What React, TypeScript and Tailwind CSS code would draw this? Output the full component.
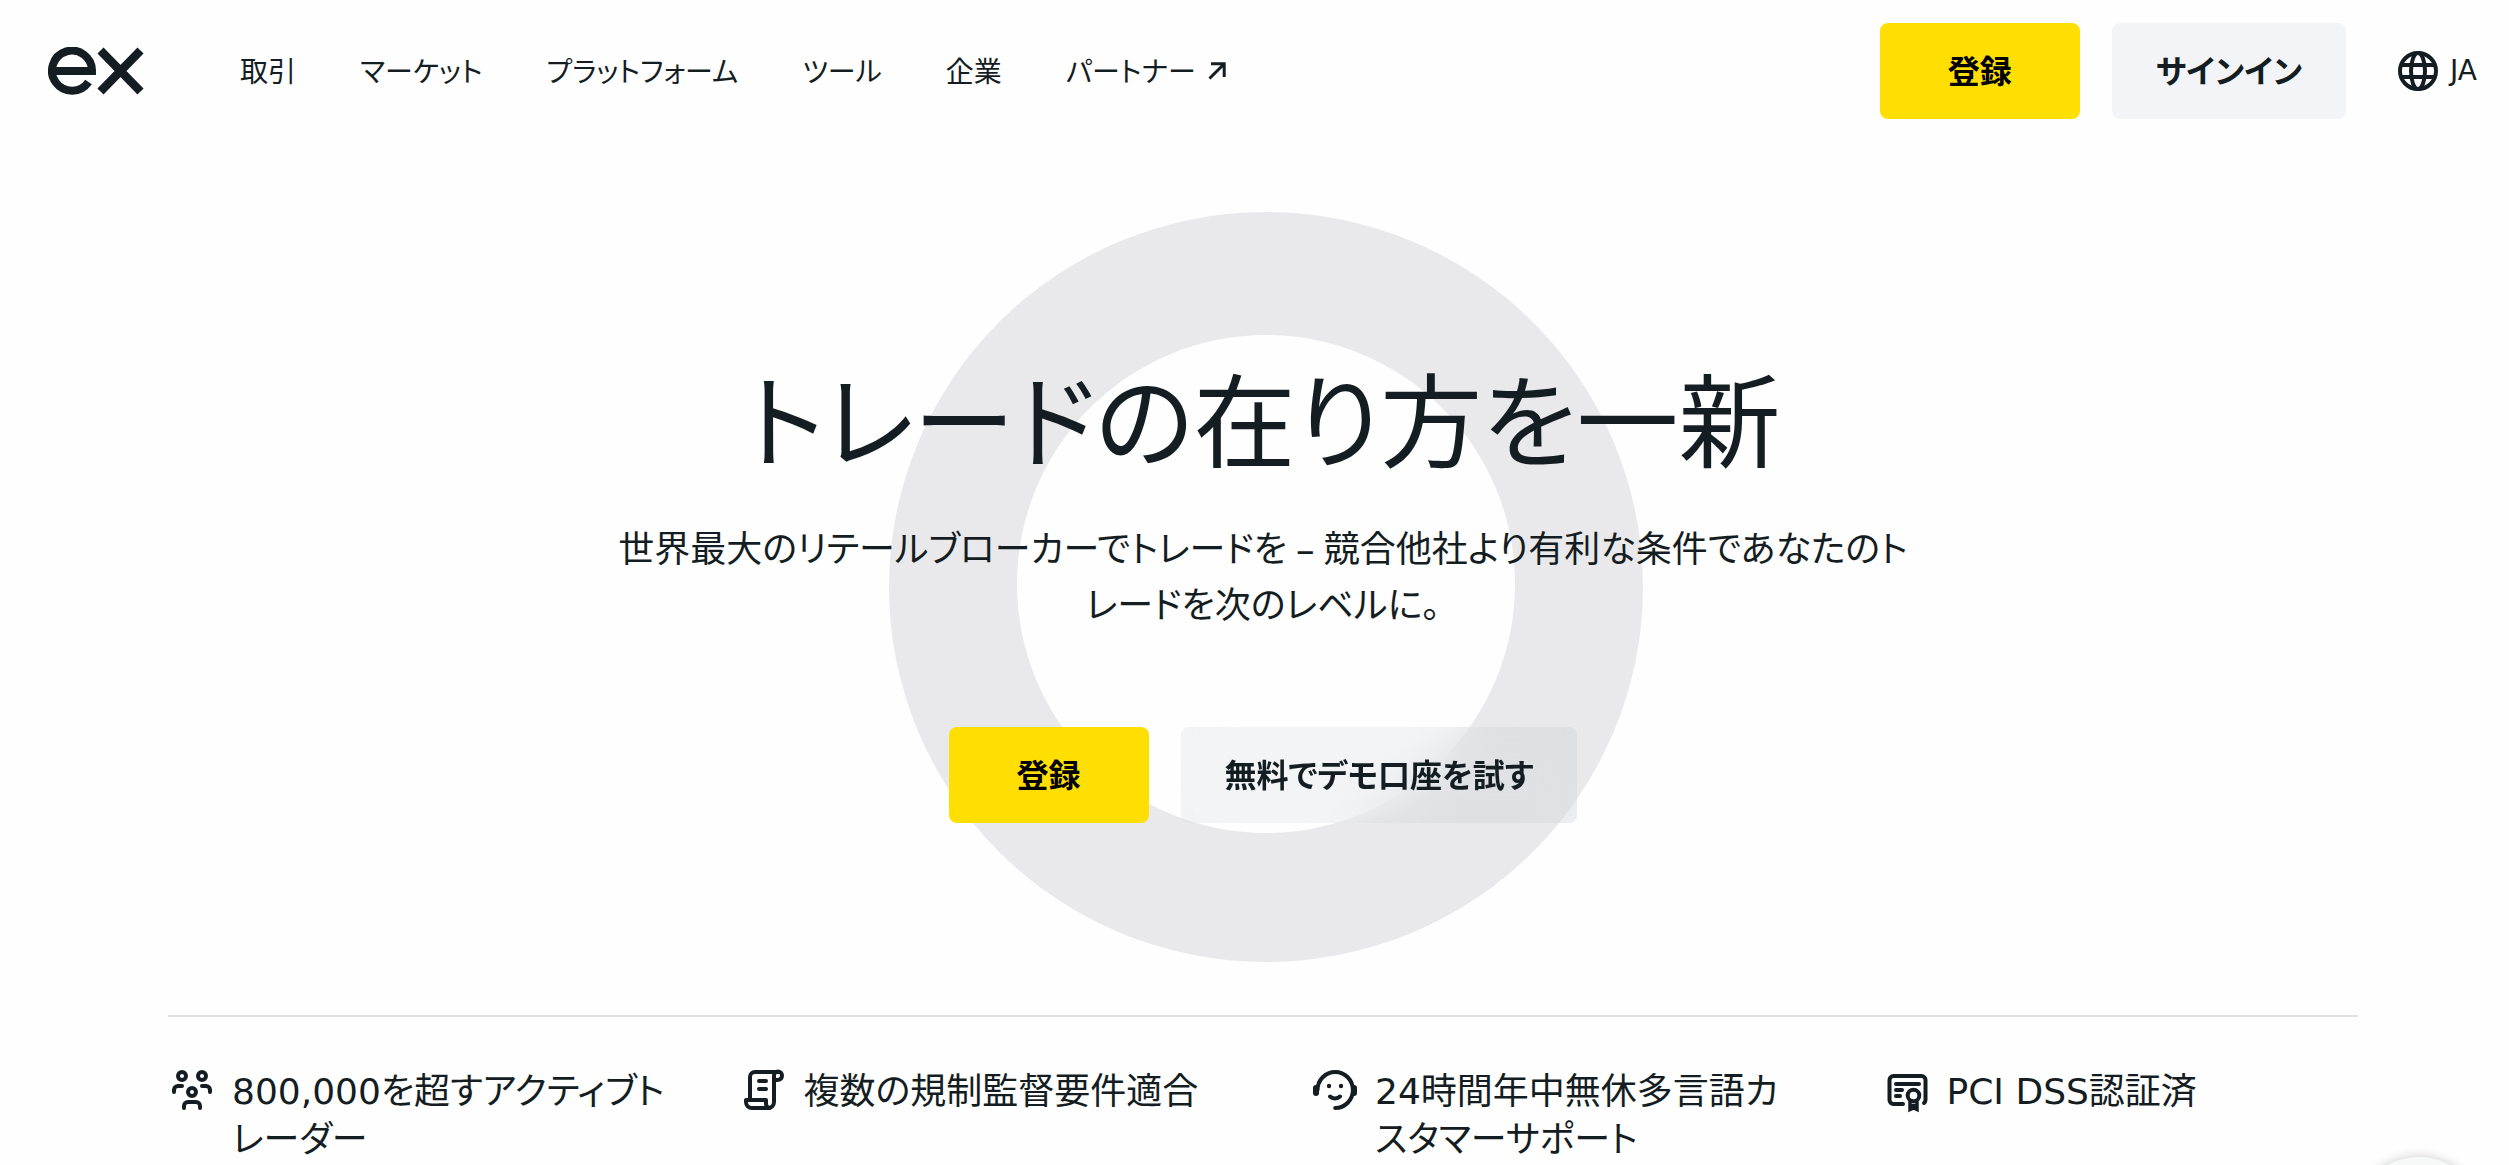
import React from "react";

interface NavItem {
  label: string;
  external?: boolean;
}

interface Feature {
  icon: React.FC;
  lines: string[];
}

const NAV_ITEMS: NavItem[] = [
  { label: "取引" },
  { label: "マーケット" },
  { label: "プラットフォーム" },
  { label: "ツール" },
  { label: "企業" },
  { label: "パートナー", external: true },
];

const Logo = () => (
  <svg viewBox="0 0 96 48" className="h-12 w-24" fill="none" stroke="currentColor" strokeWidth="8">
    <path d="M4 24h40A20 20 0 1 0 40.500 35" />
    <path d="M52.500 3.500l40 41M92.500 3.500l-40 41" strokeWidth="8.500" />
  </svg>
);

const ArrowIcon = () => (
  <svg viewBox="0 0 18 18" className="h-[18px] w-[18px]" fill="none" stroke="currentColor" strokeWidth="3">
    <path d="M1.500 16.500L16 2M3 1.800h13.200V15" />
  </svg>
);

const GlobeIcon = () => (
  <svg viewBox="0 0 40 40" className="size-10" fill="none" stroke="currentColor" strokeWidth="4">
    <circle cx="20" cy="20" r="18" />
    <ellipse cx="20" cy="20" rx="7" ry="18" />
    <path d="M3 14h34M3 26h34" />
  </svg>
);

const PeopleIcon = () => (
  <svg viewBox="0 0 48 48" className="size-12 shrink-0" fill="none" stroke="currentColor" strokeWidth="4" strokeLinecap="round">
    <circle cx="14" cy="11" r="4" />
    <circle cx="34" cy="11" r="4" />
    <circle cx="24" cy="27" r="4" />
    <path d="M6 27v-2a4 4 0 0 1 4-4h4M42 27v-2a4 4 0 0 0-4-4h-4" />
    <path d="M16 43v-2a4 4 0 0 1 4-4h8a4 4 0 0 1 4 4v2" />
  </svg>
);

const ScrollIcon = () => (
  <svg viewBox="0 0 48 48" className="size-12 shrink-0" fill="none" stroke="currentColor" strokeWidth="4" strokeLinejoin="round" strokeLinecap="round">
    <path d="M10 35V12a5 5 0 0 1 5-5h23" />
    <path d="M34 15v-4.500a3.500 3.500 0 0 1 8 0c0 3-2 4.500-5 4.500h-3v22a6 6 0 0 1-6 6H12a6 6 0 0 1-6-6v-2h20v4a4 4 0 0 0 4 4" />
    <path d="M19 16h7M19 24h7" />
  </svg>
);

const SupportIcon = () => (
  <svg viewBox="0 0 48 48" className="size-12 shrink-0" fill="none" stroke="currentColor" strokeWidth="4" strokeLinecap="round">
    <path d="M6.500 25a17.700 18 0 1 1 17.700 18" />
    <path d="M19 31.500c2.500 2.500 7.500 2.500 10 0" />
    <rect x="2" y="20" width="6" height="11" rx="3" fill="currentColor" stroke="none" />
    <rect x="40" y="20" width="6" height="11" rx="3" fill="currentColor" stroke="none" />
    <circle cx="18" cy="21" r="2.200" fill="currentColor" stroke="none" />
    <circle cx="30" cy="21" r="2.200" fill="currentColor" stroke="none" />
  </svg>
);

const CertificateIcon = () => (
  <svg viewBox="0 0 48 48" className="size-12 shrink-0" fill="none" stroke="currentColor" strokeWidth="4" strokeLinecap="round">
    <path d="M20 39h-9.500a4 4 0 0 1-4-4V15a4 4 0 0 1 4-4h28a4 4 0 0 1 4 4v20a4 4 0 0 1-1.500 3" />
    <path d="M13 19h23M13 25h6M13 31h4" />
    <circle cx="30.500" cy="30.500" r="5.800" />
    <path d="M27 37v7.500l3.500-1.500 3.500 1.500V37M27 40.500h7" strokeWidth="3.500" />
  </svg>
);

const FEATURES: Feature[] = [
  { icon: PeopleIcon, lines: ["800,000を超すアクティブト", "レーダー"] },
  { icon: ScrollIcon, lines: ["複数の規制監督要件適合"] },
  { icon: SupportIcon, lines: ["24時間年中無休多言語カ", "スタマーサポート"] },
  { icon: CertificateIcon, lines: ["PCI DSS認証済"] },
];

const BUTTON = "h-24 rounded-lg text-[32px] font-bold whitespace-nowrap";

const Header = () => (
  <header className="flex items-center justify-between pt-[23px] pr-8 pl-12">
    <div className="flex items-center gap-24">
      <a href="#" aria-label="ex">
        <Logo />
      </a>
      <nav className="flex items-center gap-16 text-[28px] whitespace-nowrap">
        {NAV_ITEMS.map((item) => (
          <a key={item.label} href="#" className="flex items-center gap-3">
            {item.label}
            {item.external && <ArrowIcon />}
          </a>
        ))}
      </nav>
    </div>
    <div className="flex items-center gap-8">
      <button className={`${BUTTON} w-[200px] bg-[#ffde02] text-black`}>登録</button>
      <button className={`${BUTTON} bg-[#f3f4f7] px-11`}>サインイン</button>
      <button className="ml-5 flex items-center gap-3 text-[28px]">
        <GlobeIcon />
        <span className="font-['DejaVu_Sans',sans-serif]">JA</span>
      </button>
    </div>
  </header>
);

const Ring = () => (
  <svg viewBox="0 0 760 752" className="absolute top-0 left-1/2 -z-10 h-[752px] w-[760px] -translate-x-1/2">
    <ellipse cx="383" cy="375" rx="377" ry="375" fill="#e9e9eb" />
    <circle cx="383" cy="372" r="249" fill="#fefefe" />
  </svg>
);

const Hero = () => (
  <section className="relative isolate flex flex-col items-center pb-48 text-center">
    <Ring />
    <h1 className="mt-[137px] text-[102px] leading-[144px]">トレードの在り方を一新</h1>
    <p className="mt-7 text-[36px] leading-[56px]">
      世界最大のリテールブローカーでトレードを – 競合他社より有利な条件であなたのト
      <br />
      レードを次のレベルに。
    </p>
    <div className="mt-[94px] flex gap-8">
      <button className={`${BUTTON} w-[200px] bg-[#ffde02] text-black`}>登録</button>
      <button className={`${BUTTON} bg-[rgba(40,65,105,0.05)] px-11 backdrop-blur-xl`}>
        無料でデモ口座を試す
      </button>
    </div>
  </section>
);

const Features = () => (
  <ul className="grid grid-cols-4 gap-24 border-t-2 border-[#e1e2e1] pt-12 font-['DejaVu_Sans','Noto_Sans_CJK_JP',sans-serif] text-[36px] leading-[48px] whitespace-nowrap">
    {FEATURES.map(({ icon: Icon, lines }) => (
      <li key={lines[0]} className="flex items-start gap-4">
        <Icon />
        <span className="pt-[3px]">
          {lines.map((line) => (
            <span key={line} className="block">
              {line}
            </span>
          ))}
        </span>
      </li>
    ))}
  </ul>
);

export default function App() {
  return (
    <div className="h-screen overflow-hidden bg-[#fefefe] font-['Noto_Sans','Noto_Sans_CJK_JP',sans-serif] text-[#141d22] [font-feature-settings:'palt']">
      <Header />
      <main className="pt-[93px] pr-[151px] pl-[168px]">
        <Hero />
        <Features />
      </main>
      <button
        aria-label="チャット"
        className="fixed right-[26px] -bottom-[120px] size-32 rounded-full bg-[#f7f8f8] shadow-[0_0_12px_rgba(0,0,0,0.2)]"
      />
    </div>
  );
}
